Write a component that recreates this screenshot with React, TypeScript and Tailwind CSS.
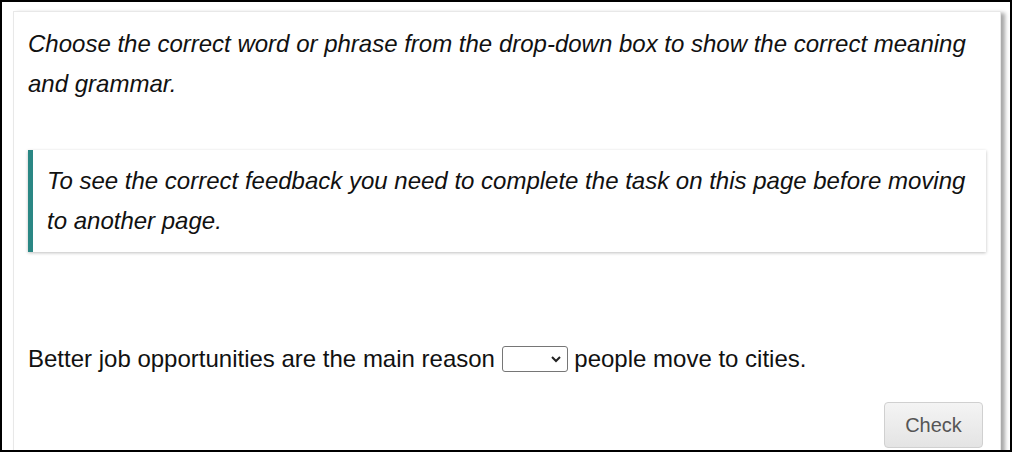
export default function App() {
  return (
    <div className="h-[452px] w-[1012px] overflow-hidden border-2 border-black bg-white font-['Liberation_Sans',Arial,sans-serif] text-[24px] text-[#111]">
      <div className="ml-[11px] mr-[9px] mt-[9px] h-[460px] border border-[#e8e8e8] bg-white px-[14px] pt-[12px] shadow-[4px_2px_4px_rgba(0,0,0,0.35)]">
        {/* Instructions */}
        <p className="italic leading-[40px]">
          Choose the correct word or phrase from the drop-down box to show the correct meaning
          and grammar.
        </p>

        {/* Notice */}
        <div className="mt-[46px] border-l-[5px] border-[#2a8784] bg-white py-[11px] pl-[14px] pr-4 shadow-[0_1px_3px_rgba(0,0,0,0.25)]">
          <p className="italic leading-[40px]">
            To see the correct feedback you need to complete the task on this page before moving
            to another page.
          </p>
        </div>

        {/* Question */}
        <p className="mt-[87px] leading-[40px]">
          Better job opportunities are the main reason{" "}
          <span className="relative inline-block h-[26px] w-[66px] rounded-[3px] border border-[#767676] bg-white align-[-5px]">
            <svg
              className="absolute right-[6px] top-[8px]"
              width="10"
              height="8"
              viewBox="0 0 10 8"
              fill="none"
              stroke="#222"
              strokeWidth="2"
            >
              <path d="M1 2l4 4 4-4" />
            </svg>
          </span>{" "}
          people move to cities.
        </p>

        <div className="mt-[23px] flex justify-end pr-[3px]">
          <button className="h-[46px] w-[99px] rounded-[4px] border border-[#d0d0d0] bg-gradient-to-b from-[#f4f4f4] to-[#e4e4e4] text-[20px] text-[#555]">
            Check
          </button>
        </div>
      </div>
    </div>
  );
}
